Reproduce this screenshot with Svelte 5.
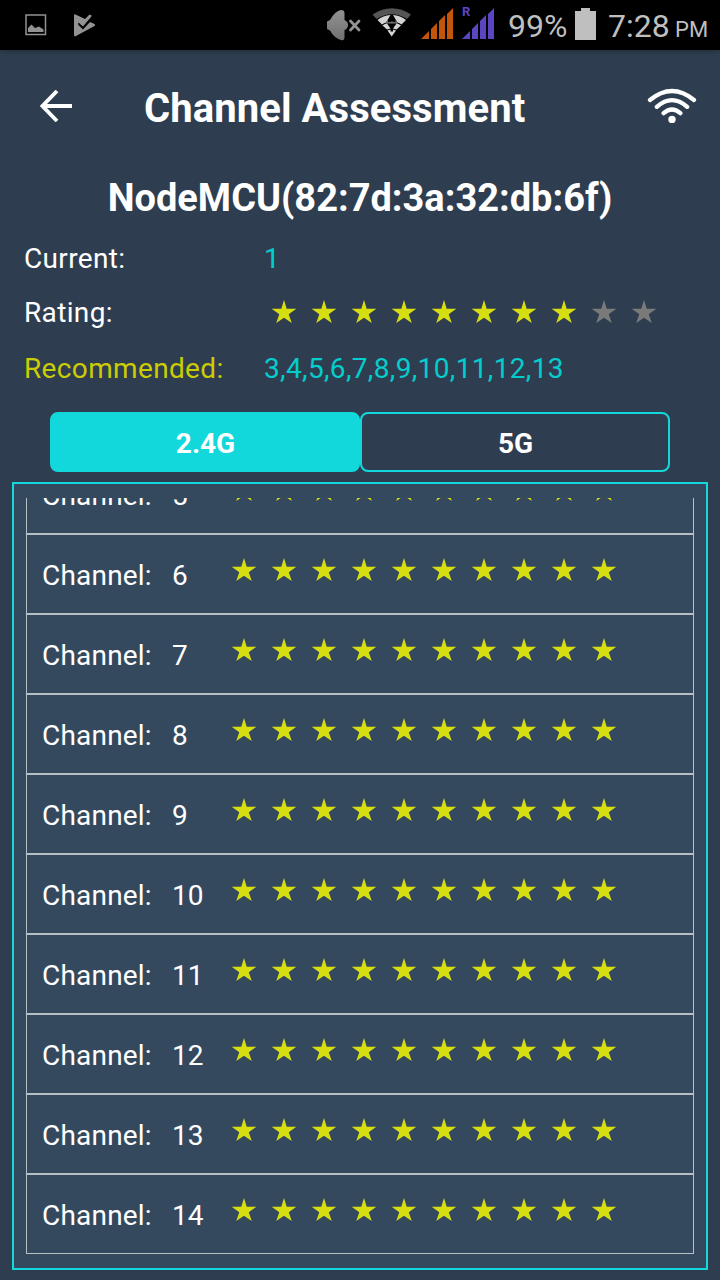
<script>
  const star = '12,0 14.7,8.7 24.2,8.8 16.7,14.2 19.8,23 12,17.8 4.2,23 7.3,14.2 -.2,8.8 9.3,8.7';
  const ten = Array.from({ length: 10 }, (_, i) => i);
  const channels = [5, 6, 7, 8, 9, 10, 11, 12, 13, 14];
  const rating = 8;
</script>

{#snippet stars(filled)}
  <div class="stars">
    {#each ten as i}
      <svg class:off={i >= filled} width="24" height="23" viewBox="0 0 24 23"><polygon points={star} /></svg>
    {/each}
  </div>
{/snippet}

{#snippet signal(color)}
  <svg class="signal" width="32" height="32" viewBox="0 0 32 32" fill={color}>
    <path d="M0 31 8 23V31ZM10 31V21L16 15V31ZM18 31V13L24 7V31ZM26 31V6L32 0V31Z" />
  </svg>
{/snippet}

<main>
  <div class="status">
    <svg class="photo" width="22" height="22" viewBox="0 0 22 22">
      <rect x="1" y="1" width="19.5" height="19.5" fill="none" stroke="#929292" stroke-width="1.5" />
      <path d="M3 18V14L6.5 10.5 10 14 14 12.5 18.5 15.5V18Z" fill="#929292" />
    </svg>
    <svg class="play" width="22" height="23" viewBox="0 0 22 23">
      <path d="M0 1Q0 0 1.5 .4L11 5 15.5 .5 18 1.8 9 12.5 4.5 8.5 4 10.5 9 15.5 16 8 20.5 10Q22 11 20.5 12L2 22Q0 23 0 21Z" fill="#929292" />
    </svg>
    <svg class="mute" width="34" height="31" viewBox="0 0 34 31">
      <defs><linearGradient id="metal" x2="0" y2="1"><stop stop-color="#929292" /><stop offset="1" stop-color="#707070" /></linearGradient></defs>
      <path d="M0 11.5 3 10Q8 1 14 0 17.5 0 17.5 3V10Q21 11.5 21 15T17.5 20V27Q17.5 31 14 30 7 28 3 20.5L0 19Z" fill="url(#metal)" />
      <path d="M23.5 11 32 20M32 11 23.5 20" stroke="#929292" stroke-width="2.8" stroke-linecap="round" />
    </svg>
    <svg class="net" width="40" height="30" viewBox="0 0 40 30">
      <path d="M.5 6.500Q20-6 39 6.500L35 11Q20 1.500 4.500 11Z" fill="#555" />
      <path d="M5.500 12Q11 7.500 18.500 7L14 14.500Q12 15 10 16.500ZM34 12Q28.500 7.500 21 7L25.500 14.500Q27.500 15 29.500 16.500Z" fill="#d4d4d4" />
      <path d="M16 14.500 20 13.500 23.500 14.500V11.500L26 15.500H13.500L16 11.500Z" fill="#777" />
      <path d="M10.500 17.500Q13 15.700 15 15.500L18.500 20.500 15 21.500ZM29 17.500Q26.500 15.700 24.500 15.500L21 20.500 24.500 21.500Z" fill="#d4d4d4" />
      <path d="M15.500 22.500 18.500 21.500V23.500H21V21.500L24 22.500 19.700 28.500Z" fill="#d4d4d4" />
    </svg>
    {@render signal('#c3560b')}
    <div class="roam"><span>R</span>{@render signal('#5b45c2')}</div>
    <span class="percent">99%</span>
    <svg class="battery" width="21" height="32" viewBox="0 0 21 32"><path d="M6 0H15V3H21V32H0V3H6Z" fill="#bfbfbf" /></svg>
    <span class="time">7:28</span><span class="pm">PM</span>
  </div>

  <header>
    <svg class="back" width="33" height="32" viewBox="0 0 33 32"><path d="M17 1 2.500 16 17 31M2.500 16H32" fill="none" stroke="#fff" stroke-width="3.800" /></svg>
    <h1>Channel Assessment</h1>
    <svg class="wifi" width="50" height="36" viewBox="0 0 50 36" fill="none" stroke="#fff" stroke-width="4.200" stroke-linecap="round">
      <path d="M3 12Q25-6 47 12M9.800 18.800Q25 5.500 40.200 18.800M16.600 25.200Q25 17.800 33.400 25.200" />
      <circle cx="25" cy="31.400" r="3.700" fill="#fff" stroke="none" />
    </svg>
  </header>

  <h2>NodeMCU(82:7d:3a:32:db:6f)</h2>

  <section class="info">
    <div class="line"><span class="label">Current:</span><span class="value">1</span></div>
    <div class="line rate"><span class="label">Rating:</span>{@render stars(rating)}</div>
    <div class="line rec"><span class="label">Recommended:</span><span class="value">3,4,5,6,7,8,9,10,11,12,13</span></div>
  </section>

  <nav>
    <button class="active">2.4G</button>
    <button>5G</button>
  </nav>

  <section class="panel">
    <div class="list">
      {#each channels as n}
        <div class="row">
          <span class="name">Channel:</span><span class="num">{n}</span>
          {@render stars(10)}
        </div>
      {/each}
    </div>
  </section>
</main>

<style>
  :global(body) { margin: 0; background: #2e3e50; }
  main {
    width: 720px; height: 1280px; overflow: hidden; display: flex; flex-direction: column;
    background: #2e3e50; color: #fff; font-family: Roboto, sans-serif; font-size: 28px;
  }
  svg { display: block; flex: none; }
  span { white-space: nowrap; }
  .status { height: 50px; flex: none; background: #000; color: #bfbfbf; display: flex; align-items: flex-start; box-shadow: 0 1px 5px #0005; }
  .photo { margin: 14px 0 0 25px; }
  .play { margin: 14px 0 0 27px; }
  .mute { margin: 10px 0 0 231px; }
  .net { margin: 8px 0 0 11px; }
  .signal { margin: 8px 0 0 9px; }
  .roam { position: relative; }
  .roam span { position: absolute; left: 9px; top: 6px; font-size: 13px; line-height: 12px; font-weight: 700; color: #5b45c2; }
  .percent, .time { font-size: 32px; line-height: 52px; }
  .percent { width: 60px; margin-left: 14px; }
  .battery { margin: 8px 0 0 7px; }
  .time { width: 62px; margin-left: 12px; }
  .pm { margin-left: 5px; font-size: 22px; line-height: 59px; }
  header { height: 110px; flex: none; display: flex; align-items: flex-start; }
  .back { margin: 40px 0 0 40px; }
  h1 { width: 400px; margin: 35px 0 0 71px; font-size: 40px; line-height: 48px; font-weight: 700; letter-spacing: .08px; white-space: nowrap; }
  .wifi { margin: 38px 0 0 102.500px; }
  h2 { flex: none; margin: 14px 0 0; height: 48px; line-height: 48px; font-size: 38px; font-weight: 700; text-align: center; white-space: nowrap; }
  .info { flex: none; padding: 10px 24px 0; height: 180px; letter-spacing: .35px; }
  .line { display: flex; height: 54px; line-height: 54px; }
  .line .label { width: 240px; }
  .value { color: #04cdcd; }
  .rec { margin-top: 2px; }
  .rec .label { color: #cccc04; }
  .stars { display: flex; gap: 16px; fill: #d6de12; }
  .off { fill: #7a7a7a; }
  .rate .stars { margin: 14px 0 0 8px; }
  nav { flex: none; display: flex; margin: 0 50px; height: 60px; }
  button {
    flex: 1; box-sizing: border-box; border: 2px solid #12d8db; border-radius: 8px; padding: 2px 0 0 1px;
    background: none; color: #fff; font: 700 28px Roboto, sans-serif;
  }
  .active { background: #12d8db; }
  .panel { flex: none; box-sizing: border-box; width: 696px; height: 788px; margin: 10px 12px 0; border: 2px solid #12d8db; padding: 14px 12px; background: #35495e; }
  .list { height: 756px; overflow: hidden; }
  .row { box-sizing: border-box; height: 80px; border: 1px solid #b7bfc6; display: flex; padding-left: 15px; line-height: 82px; }
  .row:first-child { margin-top: -44px; }
  .name { width: 130px; letter-spacing: .2px; }
  .num { width: 60px; }
  .row .stars { margin-top: 23px; }
</style>
